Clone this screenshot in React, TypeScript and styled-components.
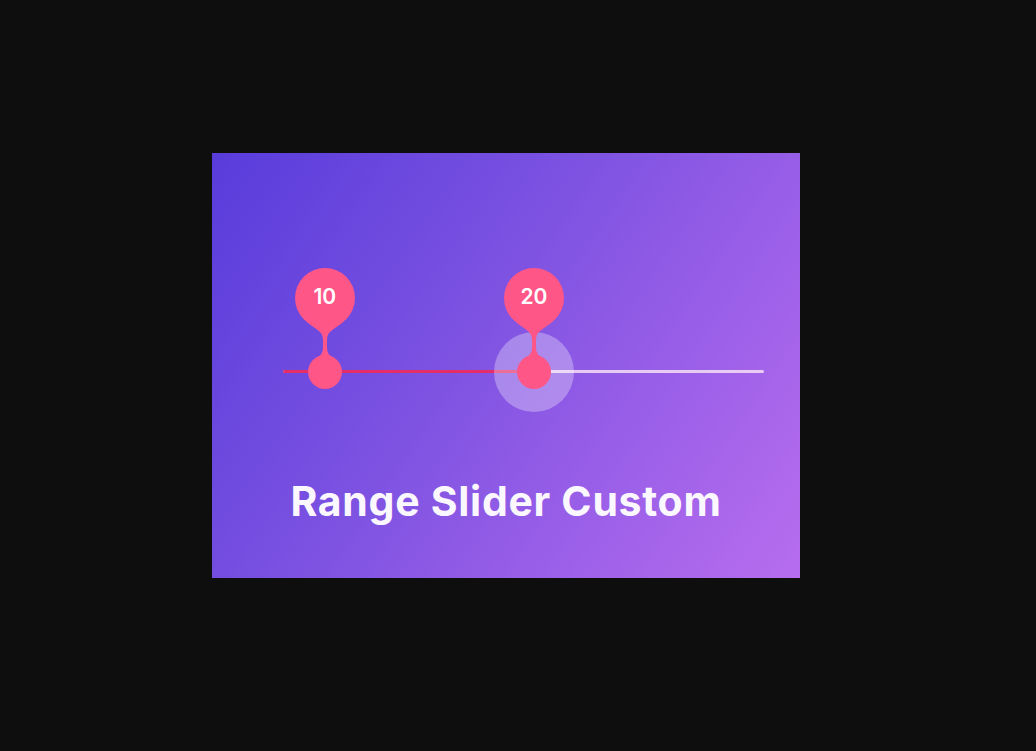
import React from "react";
import styled, { createGlobalStyle } from "styled-components";

const GlobalStyle = createGlobalStyle`
  html, body {
    margin: 0;
    padding: 0;
    background: #0e0e0e;
  }
`;

const Page = styled.div`
  min-height: 751px;
  display: flex;
  align-items: flex-start;
  padding: 153px 0 0 212px;
  box-sizing: border-box;
`;

const Card = styled.div`
  width: 588px;
  height: 425px;
  display: flex;
  flex-direction: column;
  background: linear-gradient(124deg, #583cdb 0%, #7a51e1 40%, #9a5fe8 70%, #b76dee 100%);
  font-family: "Inter", "Open Sans", sans-serif;
`;

const Rail = styled.div`
  position: relative;
  height: 3px;
  margin: 217px 36px 0 71px;
  border-radius: 2px;
  background: rgba(246, 222, 244, 0.85);
`;

const Fill = styled.div`
  position: absolute;
  left: 0;
  top: 0;
  bottom: 0;
  border-radius: 2px;
  background: #e42e6a;
`;

const Halo = styled.div`
  position: absolute;
  top: 1.5px;
  width: 80px;
  height: 80px;
  margin: -40px 0 0 -40px;
  border-radius: 50%;
  background: rgba(255, 255, 255, 0.3);
`;

const Pin = styled.div`
  position: absolute;
  top: -102px;
  width: 64px;
  height: 124px;
  margin-left: -32px;
  svg {
    display: block;
  }
`;

const Label = styled.span`
  position: absolute;
  left: 0;
  right: 0;
  top: 16px;
  text-align: center;
  color: #fff;
  font-size: 21px;
  font-weight: 600;
  line-height: 26px;
`;

const Title = styled.h1`
  margin: 106px 0 0;
  text-align: center;
  color: #fbf7ff;
  font-size: 41px;
  font-weight: 700;
  line-height: 44px;
  letter-spacing: 0.7px;
`;

const PIN_COLOR = "#fe5687";
const MIN = 8;
const MAX = 31;

const pct = (v: number) => ((v - MIN) / (MAX - MIN)) * 100;

function SliderPin({ value }: { value: number }) {
  return (
    <Pin style={{ left: `${pct(value)}%` }}>
      <svg width="64" height="124" viewBox="0 0 64 124">
        <circle cx="32" cy="30" r="30" fill={PIN_COLOR} />
        <path
          d="M13 53 C22 62 30 62 30 72 L30 80 Q30 86 24 90 L40 90 Q34 86 34 80 L34 72 C34 62 42 62 51 53 Z"
          fill={PIN_COLOR}
        />
        <circle cx="32" cy="104" r="17" fill={PIN_COLOR} />
      </svg>
      <Label>{value}</Label>
    </Pin>
  );
}

export default function App() {
  const low = 10;
  const high = 20;
  return (
    <>
      <GlobalStyle />
      <Page>
        <Card>
          <Rail>
            <Fill style={{ width: `${pct(high)}%` }} />
            <Halo style={{ left: `${pct(high)}%` }} />
            <SliderPin value={low} />
            <SliderPin value={high} />
          </Rail>
          <Title>Range Slider Custom</Title>
        </Card>
      </Page>
    </>
  );
}
